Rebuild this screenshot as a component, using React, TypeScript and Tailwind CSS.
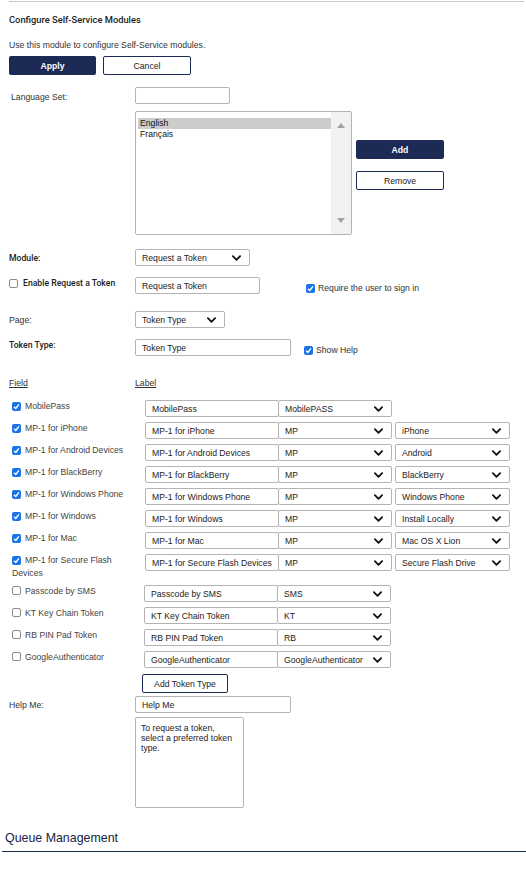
import React from "react";

const NAVY = "bg-[#1c2a55]";

const Chevron = () => (
  <svg width="9" height="6" viewBox="0 0 10 6" className="shrink-0">
    <path d="M1 1 L5 5 L9 1" fill="none" stroke="#111" strokeWidth="2" strokeLinecap="round" strokeLinejoin="round" />
  </svg>
);

const Check = ({ on }: { on: boolean }) =>
  on ? (
    <span className="inline-flex w-[9px] h-[9px] rounded-[2px] bg-[#1a73e8] items-center justify-center align-[-1px] shrink-0">
      <svg width="7" height="7" viewBox="0 0 8 8">
        <path d="M1.2 4.3 L3.2 6.2 L6.8 1.6" fill="none" stroke="#fff" strokeWidth="1.6" />
      </svg>
    </span>
  ) : (
    <span className="inline-block w-[9px] h-[9px] rounded-[2px] border border-[#8a8a8a] bg-white align-[-1px] shrink-0" />
  );

const TextBox = ({ value, className }: { value: string; className: string }) => (
  <div className={`h-[17px] border border-[#b4b4b4] rounded-[2px] bg-white flex items-center pl-[6px] text-[#222] whitespace-nowrap overflow-hidden ${className}`}>
    {value}
  </div>
);

const Select = ({ value, className }: { value: string; className: string }) => (
  <div className={`h-[17px] border border-[#b4b4b4] rounded-[2px] bg-white flex items-center justify-between pl-[6px] pr-[8px] text-[#222] whitespace-nowrap ${className}`}>
    <span>{value}</span>
    <Chevron />
  </div>
);

type Row = { name: string; on: boolean; label: string; type: string; platform?: string };

const rows: Row[] = [
  { name: "MobilePass", on: true, label: "MobilePass", type: "MobilePASS" },
  { name: "MP-1 for iPhone", on: true, label: "MP-1 for iPhone", type: "MP", platform: "iPhone" },
  { name: "MP-1 for Android Devices", on: true, label: "MP-1 for Android Devices", type: "MP", platform: "Android" },
  { name: "MP-1 for BlackBerry", on: true, label: "MP-1 for BlackBerry", type: "MP", platform: "BlackBerry" },
  { name: "MP-1 for Windows Phone", on: true, label: "MP-1 for Windows Phone", type: "MP", platform: "Windows Phone" },
  { name: "MP-1 for Windows", on: true, label: "MP-1 for Windows", type: "MP", platform: "Install Locally" },
  { name: "MP-1 for Mac", on: true, label: "MP-1 for Mac", type: "MP", platform: "Mac OS X Lion" },
  { name: "MP-1 for Secure Flash Devices", on: true, label: "MP-1 for Secure Flash Devices", type: "MP", platform: "Secure Flash Drive" },
  { name: "Passcode by SMS", on: false, label: "Passcode by SMS", type: "SMS" },
  { name: "KT Key Chain Token", on: false, label: "KT Key Chain Token", type: "KT" },
  { name: "RB PIN Pad Token", on: false, label: "RB PIN Pad Token", type: "RB" },
  { name: "GoogleAuthenticator", on: false, label: "GoogleAuthenticator", type: "GoogleAuthenticator" },
];

const bold = "font-['Roboto',sans-serif] font-medium text-[#222]";

export default function App() {
  return (
    <div className="w-[526px] h-[879px] bg-white font-['Liberation_Sans',Arial,sans-serif] text-[8.67px] leading-[12px] text-[#333] overflow-hidden">
      <div className="h-px bg-[#c8c8c8] mt-px ml-[9px] mr-[2px]" />

      <div className="pl-[9px]">
        <div className={`mt-[12px] text-[9.33px] ${bold}`}>Configure Self-Service Modules</div>
        <div className="mt-[13px]">Use this module to configure Self-Service modules.</div>

        <div className="mt-[5px] flex gap-[7px]">
          <div className={`w-[87px] h-[19px] ${NAVY} rounded-[2px] text-white font-bold flex items-center justify-center`}>Apply</div>
          <div className="w-[88px] h-[19px] border border-[#1c2a55] rounded-[2px] text-[#222] flex items-center justify-center">Cancel</div>
        </div>

        <div className="mt-[12px] flex">
          <div className="w-[126px] pl-[2px] pt-[4px]">Language Set:</div>
          <TextBox value="" className="w-[95px]" />
        </div>

        <div className="mt-[7px] flex">
          <div className="w-[126px]" />
          <div className="w-[217px] h-[124px] border border-[#b4b4b4] rounded-[2px] flex">
            <div className="flex-1 pt-[6px] pl-[2px] text-[#111] leading-[11px]">
              <div className="bg-[#cccccc] pl-[2px]">English</div>
              <div className="pl-[2px]">Français</div>
            </div>
            <div className="w-[20px] bg-[#f1f1f1] flex flex-col items-center justify-between py-[11px]">
              <svg width="8" height="5" viewBox="0 0 8 5"><path d="M0 5 L4 0 L8 5 Z" fill="#a3a3a3" /></svg>
              <svg width="8" height="5" viewBox="0 0 8 5"><path d="M0 0 L4 5 L8 0 Z" fill="#a3a3a3" /></svg>
            </div>
          </div>
          <div className="ml-[4px] pt-[29px] flex flex-col gap-[12px]">
            <div className={`w-[88px] h-[19px] ${NAVY} rounded-[2px] text-white font-bold flex items-center justify-center`}>Add</div>
            <div className="w-[88px] h-[19px] border border-[#1c2a55] rounded-[2px] text-[#222] flex items-center justify-center">Remove</div>
          </div>
        </div>

        <div className="mt-[14px] flex items-center">
          <div className={`w-[126px] ${bold}`}>Module:</div>
          <Select value="Request a Token" className="w-[115px]" />
        </div>

        <div className="mt-[11px] flex items-start">
          <div className={`w-[126px] flex items-center gap-[5px] ${bold}`}>
            <Check on={false} />
            <span>Enable Request a Token</span>
          </div>
          <TextBox value="Request a Token" className="w-[125px]" />
          <div className="ml-[46px] mt-[5px] flex items-center gap-[3px]">
            <Check on={true} />
            <span>Require the user to sign in</span>
          </div>
        </div>

        <div className="mt-[17px] flex items-center">
          <div className="w-[126px]">Page:</div>
          <Select value="Token Type" className="w-[90px]" />
        </div>

        <div className="mt-[11px] flex items-start">
          <div className={`w-[126px] ${bold}`}>Token Type:</div>
          <TextBox value="Token Type" className="w-[156px]" />
          <div className="ml-[13px] mt-[5px] flex items-center gap-[3px]">
            <Check on={true} />
            <span>Show Help</span>
          </div>
        </div>

        <div className="mt-[21px] flex">
          <div className="w-[126px] underline">Field</div>
          <div className="underline">Label</div>
        </div>

        <div className="mt-[11px] flex flex-col gap-[5px]">
          {rows.map((r, i) => (
            <div key={r.name} className="flex items-start">
              <div className={`${i < 8 ? "w-[136px]" : "w-[135px]"} pl-[3px] pr-[6px] leading-[13px] text-[#444]`}>
                <Check on={r.on} />
                <span className="ml-[4px]">{r.name}</span>
              </div>
              <TextBox value={r.label} className="w-[134px]" />
              <Select value={r.type} className="w-[114px] -ml-px" />
              {r.platform && <Select value={r.platform} className="w-[115px] ml-[3px]" />}
            </div>
          ))}
        </div>

        <div className="mt-[6px] flex">
          <div className="w-[133px]" />
          <div className="w-[86px] h-[19px] border border-[#1c2a55] rounded-[2px] text-[#222] flex items-center justify-center">Add Token Type</div>
        </div>

        <div className="mt-[3px] flex items-start">
          <div className="w-[126px] pt-[3px]">Help Me:</div>
          <TextBox value="Help Me" className="w-[156px]" />
        </div>

        <div className="mt-[4px] flex">
          <div className="w-[126px]" />
          <div className="w-[109px] h-[91px] border border-[#b4b4b4] rounded-[2px] pt-[5px] pl-[5px] pr-[4px] leading-[10px] text-[#222]">
            To request a token, select a preferred token type.
          </div>
        </div>
      </div>

      <div className="mt-[23px] pl-[5px] text-[12.4px] leading-[15px] text-[#1a2444]">Queue Management</div>
      <div className="mt-[5px] h-px bg-[#1c2a55] ml-[2px]" />
    </div>
  );
}
